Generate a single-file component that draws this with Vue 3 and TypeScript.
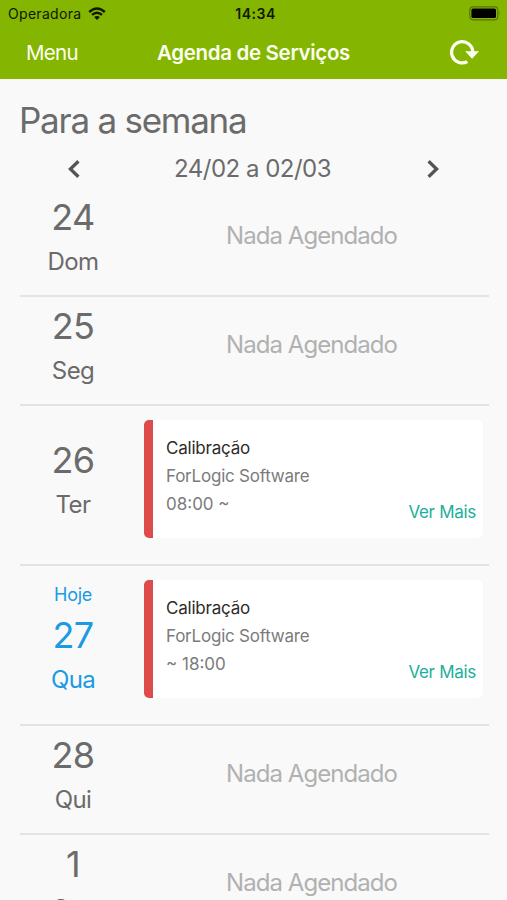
<script setup lang="ts">
interface Appointment {
  title: string
  client: string
  time: string
}

interface Day {
  number: number
  name: string
  today?: boolean
  appointment?: Appointment
}

const days: Day[] = [
  { number: 24, name: 'Dom' },
  { number: 25, name: 'Seg' },
  {
    number: 26,
    name: 'Ter',
    appointment: { title: 'Calibração', client: 'ForLogic Software', time: '08:00 ~' },
  },
  {
    number: 27,
    name: 'Qua',
    today: true,
    appointment: { title: 'Calibração', client: 'ForLogic Software', time: '~ 18:00' },
  },
  { number: 28, name: 'Qui' },
  { number: 1, name: 'Sex' },
]
</script>

<template>
  <div class="screen">
    <header class="header">
      <div class="status">
        <div class="carrier">
          <span class="carrier-name">Operadora</span>
          <svg class="wifi" width="18" height="14" viewBox="0 0 18 14">
            <path d="M1.2 5Q9 -1.9 16.8 5" />
            <path d="M4 7.9Q9 3.5 14 7.9" />
            <path class="dot" d="M6.1 10.1Q9 7.8 11.9 10.1L9 13z" />
          </svg>
        </div>
        <span class="clock">14:34</span>
        <svg class="battery" width="32" height="15" viewBox="0 0 32 15">
          <rect class="shell" x="0.8" y="0.8" width="28" height="13" rx="3.2" />
          <rect x="2.4" y="2.4" width="24.6" height="9.6" rx="1.6" />
          <path class="cap" d="M30 5.2Q31.6 7.3 30 9.6z" />
        </svg>
      </div>
      <nav class="nav">
        <span class="menu">Menu</span>
        <h1 class="title">Agenda de Serviços</h1>
        <svg class="refresh" width="30" height="26" viewBox="0 0 30 26">
          <path class="arc" d="M18.3 22.6A10.6 10.6 0 1 1 23.8 13" />
          <path class="tip" d="M16.1 12.3H30L23.1 19.8z" />
        </svg>
      </nav>
    </header>

    <main class="content">
      <h2 class="heading">Para a semana</h2>
      <div class="week">
        <svg class="chevron" width="12" height="18" viewBox="0 0 12 18">
          <path d="M10.4 1.2L2.4 9L10.4 16.8" />
        </svg>
        <span class="range">24/02 a 02/03</span>
        <svg class="chevron" width="12" height="18" viewBox="0 0 12 18">
          <path d="M1.6 1.2L9.6 9L1.6 16.8" />
        </svg>
      </div>

      <section
        v-for="day in days"
        :key="day.number"
        class="day"
        :class="{ today: day.today, busy: day.appointment }"
      >
        <div class="date">
          <span v-if="day.today" class="now">Hoje</span>
          <span class="number">{{ day.number }}</span>
          <span class="name">{{ day.name }}</span>
        </div>
        <article v-if="day.appointment" class="card">
          <div class="details">
            <span class="service">{{ day.appointment.title }}</span>
            <span>{{ day.appointment.client }}</span>
            <span class="time">{{ day.appointment.time }}</span>
          </div>
          <a class="more">Ver Mais</a>
        </article>
        <p v-else class="empty">Nada Agendado</p>
      </section>
    </main>
  </div>
</template>

<style>
body {
  margin: 0;
  overflow: hidden;
  background: #f9f9f9;
}
</style>

<style scoped>
.screen {
  width: 507px;
  height: 900px;
  overflow: hidden;
  background: #f9f9f9;
  color: #6b6b6b;
  font-family: Inter, "Liberation Sans", sans-serif;
  white-space: nowrap;
}

.header {
  height: 79px;
  background: #84b500;
}

.status {
  display: grid;
  grid-template-columns: 1fr auto 1fr;
  align-items: center;
  height: 27px;
  padding: 0 6px 0 8px;
  color: #101800;
  font-size: 14px;
}

.carrier {
  display: flex;
  align-items: center;
  gap: 7px;
}

.carrier-name {
  letter-spacing: 0.3px;
}

.wifi path {
  fill: none;
  stroke: #101800;
  stroke-width: 2.4;
}

.wifi .dot {
  fill: #101800;
  stroke: none;
}

.clock {
  padding-left: 2px;
  font-weight: 600;
  letter-spacing: 0.5px;
}

.battery {
  justify-self: end;
}

.battery .shell {
  fill: none;
  stroke: #547500;
  stroke-width: 1.2;
}

.battery .cap {
  fill: #547500;
}

.nav {
  display: grid;
  grid-template-columns: 1fr auto 1fr;
  align-items: center;
  height: 50px;
  padding: 0 28px 0 26px;
  color: #fbfff0;
}

.menu {
  font-size: 20.5px;
  letter-spacing: -0.7px;
}

.title {
  margin: 0;
  padding-left: 2px;
  font-size: 20.5px;
  font-weight: 600;
  letter-spacing: -0.33px;
}

.refresh {
  justify-self: end;
}

.refresh .arc {
  fill: none;
  stroke: #fbfff0;
  stroke-width: 3.3;
}

.refresh .tip {
  fill: #fbfff0;
}

.content {
  padding: 18px 18px 0 20px;
}

.heading {
  margin: 0 0 0 -1px;
  padding-top: 1px;
  font-size: 35px;
  font-weight: 400;
  line-height: 45px;
  letter-spacing: -1.25px;
}

.week {
  display: grid;
  grid-template-columns: 107px 1fr 113px;
  align-items: center;
  justify-items: center;
  height: 39px;
  padding-top: 6px;
}

.range {
  padding-left: 2px;
  font-size: 24px;
  letter-spacing: -0.5px;
}

.chevron {
  fill: none;
  stroke: #555;
  stroke-width: 3.3;
}

.day {
  display: grid;
  grid-template-columns: 107px 1fr;
  box-sizing: border-box;
  height: 109px;
  border-bottom: 2px solid #e3e3e3;
}

.busy {
  height: 160px;
}

.date {
  display: flex;
  flex-direction: column;
  align-items: center;
  padding: 7px 1px 0 0;
}

.busy .date {
  padding-top: 32px;
}

.today .date {
  padding-top: 17px;
  color: #1a9be3;
}

.now {
  font-size: 18px;
  line-height: 24px;
  margin-bottom: 6px;
  letter-spacing: -0.3px;
}

.number {
  font-size: 36px;
  line-height: 44px;
  letter-spacing: -0.6px;
}

.name {
  font-size: 24px;
  line-height: 46px;
  letter-spacing: -0.6px;
}

.empty {
  margin: 0;
  padding: 30px 0 0 7px;
  color: #b1b1b1;
  font-size: 24px;
  line-height: 36px;
  letter-spacing: -0.95px;
  text-align: center;
}

.card {
  display: flex;
  justify-content: space-between;
  box-sizing: border-box;
  height: 118px;
  margin: 14px 6px 0 17px;
  padding: 14px 7px 12px 13px;
  border-left: 9px solid #de4b4b;
  border-radius: 5px;
  background: #fff;
}

.details {
  display: flex;
  flex-direction: column;
  color: #7b7b7b;
  font-size: 17px;
  line-height: 28px;
  letter-spacing: -0.22px;
}

.service {
  color: #2c2c2c;
}

.time {
  letter-spacing: 0;
}

.more {
  align-self: flex-end;
  color: #1ab09a;
  font-size: 17px;
  line-height: 28px;
  letter-spacing: -0.3px;
}
</style>
